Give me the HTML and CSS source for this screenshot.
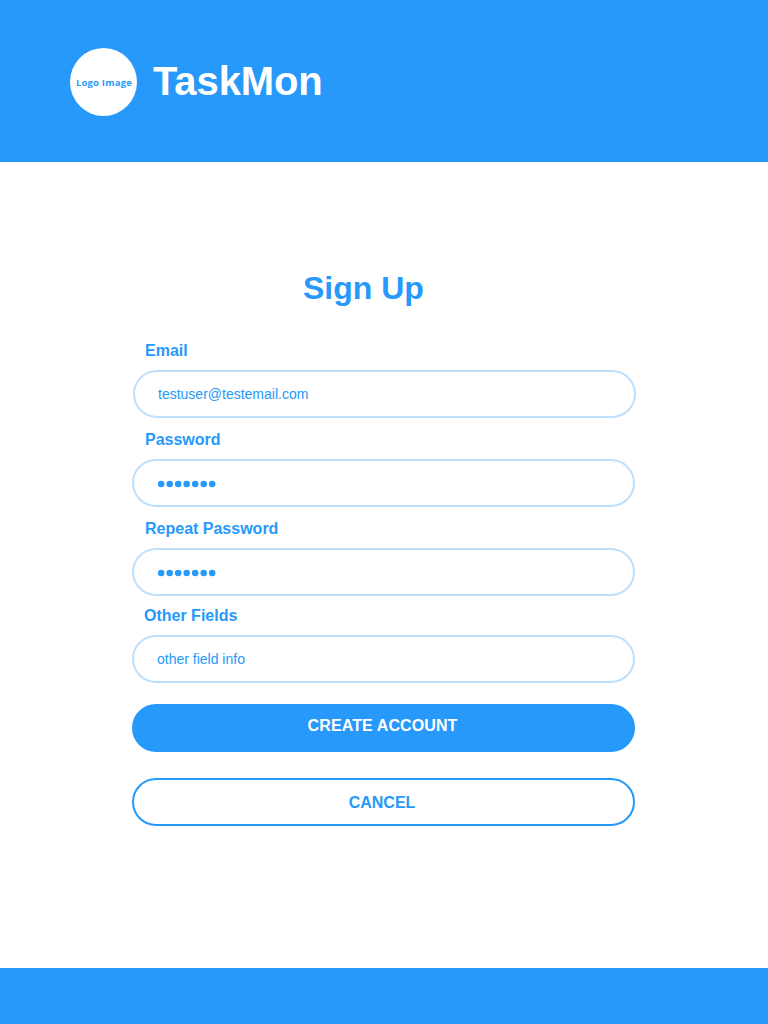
FILE: index.html
```html
<!DOCTYPE html>
<html lang="en">
<head>
<meta charset="utf-8">
<title>TaskMon</title>
<link rel="stylesheet" href="styles.css">
</head>
<body>
<header class="header">
  <div class="logo">Logo Image</div>
  <div class="brand">TaskMon</div>
</header>
<main class="main">
  <h1 class="title">Sign Up</h1>
  <form class="form">
    <div class="group group-email">
      <label class="label">Email</label>
      <div class="field">testuser@testemail.com</div>
    </div>
    <div class="group">
      <label class="label">Password</label>
      <div class="field"><svg class="dots" width="60" height="8" viewBox="0 0 60 8"><g id="mask"><circle cx="4.2" cy="4" r="3.25"/><circle cx="12.7" cy="4" r="3.25"/><circle cx="21.2" cy="4" r="3.25"/><circle cx="29.7" cy="4" r="3.25"/><circle cx="38.2" cy="4" r="3.25"/><circle cx="46.7" cy="4" r="3.25"/><circle cx="55.2" cy="4" r="3.25"/></g></svg></div>
    </div>
    <div class="group">
      <label class="label">Repeat Password</label>
      <div class="field"><svg class="dots" width="60" height="8" viewBox="0 0 60 8"><use href="#mask"/></svg></div>
    </div>
    <div class="group group-other">
      <label class="label">Other Fields</label>
      <div class="field">other field info</div>
    </div>
    <button type="button" class="button primary">CREATE ACCOUNT</button>
    <button type="button" class="button secondary">CANCEL</button>
  </form>
</main>
<footer class="footer"></footer>
</body>
</html>
```
FILE: styles.css
```css
* { box-sizing: border-box; }
body {
  margin: 0;
  height: 1024px;
  display: flex;
  flex-direction: column;
  background: #fff;
  color: #2699fb;
  font-family: Arial, "Liberation Sans", sans-serif;
}
.header {
  height: 162px;
  padding: 2px 0 0 70px;
  display: flex;
  align-items: center;
  background: #2699fb;
}
.logo {
  width: 67px;
  height: 68px;
  padding-left: 1px;
  border-radius: 50%;
  background: #fff;
  font-family: "Open Sans", "Noto Sans", sans-serif;
  font-size: 9.5px;
  font-weight: bold;
  line-height: 69px;
  letter-spacing: 0.2px;
  text-align: center;
  white-space: nowrap;
}
.brand {
  margin-left: 16px;
  padding-bottom: 2px;
  color: #fff;
  font-size: 40px;
  font-weight: bold;
  line-height: 68px;
  letter-spacing: -0.1px;
}
.main { flex: 1; }
.title {
  margin: 108px 0 0 303px;
  font-size: 32px;
  line-height: 36px;
}
.form {
  width: 503px;
  margin: 34px 0 0 132px;
  display: flex;
  flex-direction: column;
}
.group { height: 89px; }
.group-email { margin: 0 -1px 0 1px; }
.group-other { margin-top: -2px; }
.label {
  display: block;
  height: 30px;
  padding-left: 13px;
  font-size: 16px;
  font-weight: bold;
  line-height: 22px;
}
.group-email .label,
.group-other .label { padding-left: 12px; }
.field {
  height: 48px;
  padding: 0 23px;
  display: flex;
  align-items: center;
  border: 2px solid #bce0fd;
  border-radius: 24px;
  font-size: 14px;
}
.dots {
  margin-top: 2px;
  fill: #2699fb;
}
.button {
  height: 48px;
  padding: 0 3px 0 0;
  border: 2px solid #2699fb;
  border-radius: 24px;
  font: bold 16px/44px Arial, "Liberation Sans", sans-serif;
}
.primary {
  margin-top: 10px;
  padding: 0 2px 4px 0;
  line-height: 40px;
  letter-spacing: 0.1px;
  background: #2699fb;
  color: #fff;
}
.secondary {
  margin-top: 26px;
  line-height: 46px;
  background: #fff;
  color: #2699fb;
}
.footer { height: 56px; background: #2699fb; }
```
